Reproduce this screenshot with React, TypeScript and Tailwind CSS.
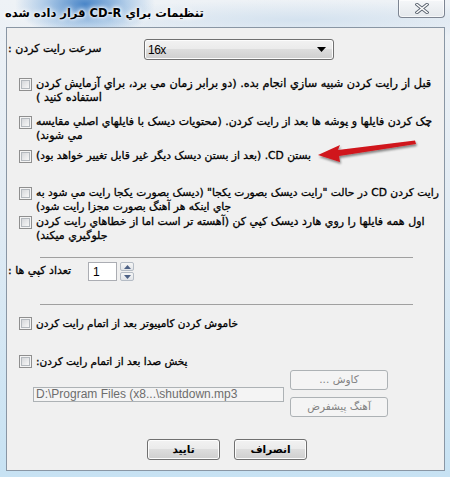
const fa = "font-['DejaVu_Sans',sans-serif]"
const heavy = '[-webkit-text-stroke:0.3px_#000]'

function Check() {
  return (
    <div className="mt-[1px] h-[13px] w-[13px] shrink-0 border border-[#8f8f8f] bg-[#f4f4f4] p-[1px]">
      <div className="h-full w-full border border-[#b4b9be] bg-[linear-gradient(135deg,#d6d8db,#f7f7f7)]" />
    </div>
  )
}

function CheckRow({ className, lines, size = 'text-[11px]' }: { className: string; lines: string[]; size?: string }) {
  return (
    <div className={`flex items-start pl-[12px] ${className}`}>
      <Check />
      <div dir="rtl" className={`ml-[4px] w-[405px] shrink-0 text-left leading-[14px] whitespace-nowrap text-black ${size} ${heavy} ${fa}`}>
        {lines.map((l, i) => (
          <div key={i}>{l}</div>
        ))}
      </div>
    </div>
  )
}

function Sep({ className }: { className: string }) {
  return <div className={`ml-[33px] h-px w-[373px] bg-[#a0a0a0] ${className}`} />
}

function WinButton({ label, disabled }: { label: string; disabled?: boolean }) {
  if (disabled) {
    return (
      <div dir="rtl" className={`flex h-[20px] w-[98px] items-center justify-center rounded-[3px] border border-[#adb2b5] bg-[#f4f4f4] text-[10.5px] text-[#838383] ${fa}`}>
        {label}
      </div>
    )
  }
  return (
    <div className={`flex h-[21px] w-[73px] items-center justify-center rounded-[3px] border border-[#707070] bg-[linear-gradient(to_bottom,#f2f2f2_0%,#ebebeb_45%,#dddddd_50%,#cfcfcf_100%)] text-[10.5px] font-bold text-black shadow-[inset_0_0_0_1px_#fcfcfc] ${fa}`}>
      {label}
    </div>
  )
}

export default function App() {
  return (
    <div className="relative h-[477px] w-[450px] overflow-hidden bg-[radial-gradient(ellipse_70px_34px_at_85px_4px,#4a86c8,rgba(120,170,220,0.5)_60%,transparent),radial-gradient(ellipse_260px_20px_at_300px_20px,#d4e2ef,transparent),linear-gradient(to_bottom,#eef2f6,#e3ecf4_40%,#c7e2f3)]">
      {/* title bar */}
      <div className="flex h-[27px] items-start">
        <div
          dir="rtl"
          className={`ml-[5px] mt-[6px] text-[11.5px] font-bold leading-[14px] text-black [text-shadow:0_0_6px_#fff,0_0_4px_#fff,0_0_2px_#fff] ${fa}`}
        >
          تنظيمات براي CD-R قرار داده شده
        </div>
        <div className="ml-auto mr-[5px] flex h-[18px] w-[47px] items-center justify-center rounded-b-[4px] border border-t-0 border-[#7d8592] bg-[linear-gradient(to_bottom,#f5f7f9,#e4e8ec)] shadow-[inset_0_0_0_1px_#ffffffaa]">
          <svg width="14" height="11" viewBox="0 0 14 11">
            <path d="M2 1.5 L12 9.5 M12 1.5 L2 9.5" stroke="#5b6470" strokeWidth="3.4" strokeLinecap="square" />
            <path d="M2 1.5 L12 9.5 M12 1.5 L2 9.5" stroke="#ffffff" strokeWidth="1.6" strokeLinecap="square" />
          </svg>
        </div>
      </div>

      {/* client area */}
      <div className="ml-[6px] h-[444px] w-[439px] overflow-hidden border border-[#8996a4] bg-[#f0f0f0]">
        {/* speed */}
        <div className="mt-[11px] flex h-[21px] items-center">
          <div dir="rtl" className={`w-[137px] pl-[1px] text-left text-[11px] text-black ${heavy} ${fa}`}>
            سرعت رايت کردن :
          </div>
          <div className="flex h-[21px] w-[190px] items-center rounded-[3px] border border-[#707070] bg-[linear-gradient(to_bottom,#f2f2f2_0%,#ebebeb_45%,#dddddd_50%,#cfcfcf_100%)] pl-[3px] pr-[7px] shadow-[inset_0_0_0_1px_#fcfcfc]">
            <span className="font-['Liberation_Sans',sans-serif] text-[12px] tracking-[-0.5px] text-black">16x</span>
            <svg className="ml-auto" width="9" height="5" viewBox="0 0 9 5">
              <path d="M0 0 H9 L4.5 5 Z" fill="#000" />
            </svg>
          </div>
        </div>

        <CheckRow
          className="mt-[17px]"
          size="text-[11.3px]"
          lines={['قبل از رايت کردن شبيه سازي انجام بده. (دو برابر زمان مي برد، براي آزمايش کردن', 'استفاده کنيد )']}
        />
        <CheckRow
          className="mt-[10px]"
          lines={['چک کردن فايلها و پوشه ها بعد از رايت کردن. (محتويات ديسک با فايلهاي اصلي مقايسه', 'مي شوند)']}
        />
        <CheckRow
          className="mt-[6px]"
          size="text-[10.7px]"
          lines={['بستن CD. (بعد از بستن ديسک ديگر غير قابل تغيير خواهد بود)']}
        />
        <CheckRow
          className="mt-[23px]"
          size="text-[10.7px]"
          lines={['رايت کردن CD در حالت "رايت ديسک بصورت يکجا" (ديسک بصورت يکجا رايت مي شود به', 'جاي اينکه هر آهنگ بصورت مجزا رايت شود)']}
        />
        <CheckRow
          className="mt-[1px]"
          lines={['اول همه فايلها را روي هارد ديسک کپي کن (آهسته تر است اما از خطاهاي رايت کردن', 'جلوگيري ميکند)']}
        />

        <Sep className="mt-[14px]" />

        {/* copies */}
        <div className="mt-[4px] flex h-[19px] items-center">
          <div dir="rtl" className={`w-[81px] pl-[1px] text-left text-[11px] text-black ${heavy} ${fa}`}>
            تعداد کپي ها :
          </div>
          <div className="flex h-[19px] w-[29px] items-center border border-[#abadb3] bg-white pl-[4px] font-['Liberation_Sans',sans-serif] text-[12px] text-black">
            1
          </div>
          <div className="ml-[3px] flex h-[19px] w-[14px] flex-col gap-px">
            <div className="flex flex-1 items-center justify-center rounded-[2px] border border-[#b5bcc5] bg-[linear-gradient(to_bottom,#f6f6f6,#e1e4e8)]">
              <svg width="7" height="4" viewBox="0 0 7 4"><path d="M0 4 L3.5 0 L7 4 Z" fill="#4d6185" /></svg>
            </div>
            <div className="flex flex-1 items-center justify-center rounded-[2px] border border-[#b5bcc5] bg-[linear-gradient(to_bottom,#f6f6f6,#e1e4e8)]">
              <svg width="7" height="4" viewBox="0 0 7 4"><path d="M0 0 L7 0 L3.5 4 Z" fill="#4d6185" /></svg>
            </div>
          </div>
        </div>

        <Sep className="mt-[23px]" />

        <CheckRow className="mt-[11px]" size="text-[10.5px]" lines={['خاموش کردن کامپيوتر بعد از اتمام رايت کردن']} />
        <CheckRow className="mt-[24px]" size="text-[10.5px]" lines={['پخش صدا بعد از اتمام رايت کردن:']} />

        {/* sound file */}
        <div className="mt-[2px] flex items-start">
          <div className="ml-[26px] mt-[17px] flex h-[15px] w-[251px] items-center border border-[#adb2b5] bg-[#f4f4f4] pl-[2px] font-['Liberation_Sans',sans-serif] text-[12px] leading-[13px] text-[#6d6d6d]">
            D:\Program Files (x8...\shutdown.mp3
          </div>
          <div className="ml-[6px] flex flex-col gap-[7px]">
            <WinButton label="کاوش ..." disabled />
            <WinButton label="آهنگ پيشفرض" disabled />
          </div>
        </div>

        <div className="mt-[22px] flex gap-[14px] pl-[140px]">
          <WinButton label="تاييد" />
          <WinButton label="انصراف" />
        </div>
      </div>

      {/* red annotation arrow */}
      <svg className="pointer-events-none absolute left-0 top-0" width="450" height="477">
        <defs>
          <filter id="sh" x="-20%" y="-50%" width="140%" height="200%">
            <feDropShadow dx="1" dy="2" stdDeviation="1.2" floodColor="#000" floodOpacity="0.45" />
          </filter>
        </defs>
        <path
          d="M318 155 L340 145 L338 150 L415 140.5 L416 144 L339 156 L340 162 Z"
          fill="#d0141b"
          filter="url(#sh)"
        />
      </svg>
    </div>
  )
}
